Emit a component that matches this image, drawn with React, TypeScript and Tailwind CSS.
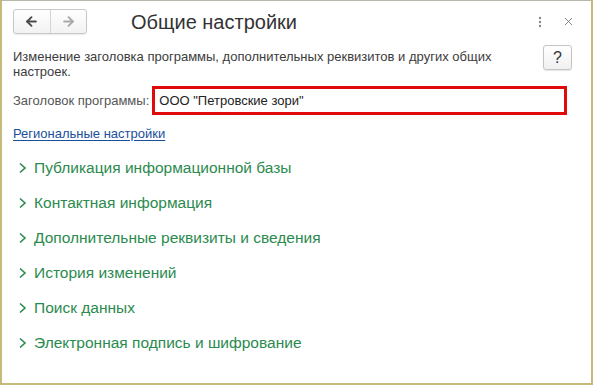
import { ArrowLeft, ArrowRight, X } from "lucide-react"

const groups = [
  "Публикация информационной базы",
  "Контактная информация",
  "Дополнительные реквизиты и сведения",
  "История изменений",
  "Поиск данных",
  "Электронная подпись и шифрование",
]

function Chevron() {
  return (
    <svg width="9" height="12" viewBox="0 0 9 12" className="shrink-0">
      <path d="M2 1.5 L7 6 L2 10.5" fill="none" stroke="#2b8a4e" strokeWidth="1.6" />
    </svg>
  )
}

export default function App() {
  return (
    <div
      className="w-[593px] h-[385px] bg-white border-l-2 border-r-2 border-b-2 border-t border-l-[#c4ba7c] border-r-[#c4ba7c] border-b-[#c4ba7c] border-t-[#b8b8a8] text-[#404040] overflow-hidden"
      style={{ fontFamily: '"Liberation Sans", Arial, sans-serif' }}
    >
      <div className="flex items-center h-[36px] pl-[11px] pr-[16px] pt-[5px]">
        <div className="flex h-[25px] w-[74px] rounded-[3px] border border-[#c8c8c8] bg-gradient-to-b from-white to-[#f2f2f2] shadow-[0_1px_1px_rgba(0,0,0,0.08)]">
          <div className="flex flex-1 items-center justify-center border-r border-[#d4d4d4]">
            <ArrowLeft size={15} strokeWidth={3} className="text-[#4a4a4a]" />
          </div>
          <div className="flex flex-1 items-center justify-center">
            <ArrowRight size={15} strokeWidth={3} className="text-[#a8a8a8]" />
          </div>
        </div>
        <div className="ml-[44px] text-[20px] text-[#333] leading-none">Общие настройки</div>
        <div className="ml-auto flex items-center gap-[20px]">
          <svg width="4" height="12" viewBox="0 0 4 12">
            <circle cx="2" cy="2" r="1.2" fill="#888" />
            <circle cx="2" cy="6" r="1.2" fill="#888" />
            <circle cx="2" cy="10" r="1.2" fill="#888" />
          </svg>
          <X size={13} strokeWidth={1.5} className="text-[#666]" />
        </div>
      </div>

      <div className="flex items-start pl-[11px] pr-[19px] pt-[9px]">
        <p className="flex-1 text-[13px] leading-[15px] text-[#3c3c3c] pr-[30px] pt-[3px]">
          Изменение заголовка программы, дополнительных реквизитов и других общих настроек.
        </p>
        <div className="mt-[-1px] flex h-[25px] w-[29px] items-center justify-center rounded-[3px] border border-[#c4c4c4] bg-gradient-to-b from-white to-[#f0f0f0] text-[16px] text-[#333] shadow-[0_1px_1px_rgba(0,0,0,0.1)]">
          ?
        </div>
      </div>

      <div className="flex items-center pl-[11px] pr-[24px] mt-[7px]">
        <span className="text-[13px] text-[#555] mr-[3px]">Заголовок программы:</span>
        <div className="flex-1 h-[29px] border-[3px] border-[#e00a0a] flex items-center px-[4px] text-[13px] text-[#222]">
          ООО "Петровские зори"
        </div>
      </div>

      <div className="pl-[11px] mt-[6px]">
        <a className="text-[13px] text-[#1b4f9c] underline underline-offset-2" href="#">
          Региональные настройки
        </a>
      </div>

      <div className="flex flex-col pl-[16px] mt-[5px]">
        {groups.map((g) => (
          <div key={g} className="flex items-center h-[35px] gap-[7px]">
            <Chevron />
            <span className="text-[15.5px] text-[#2b8a4e]">{g}</span>
          </div>
        ))}
      </div>
    </div>
  )
}
